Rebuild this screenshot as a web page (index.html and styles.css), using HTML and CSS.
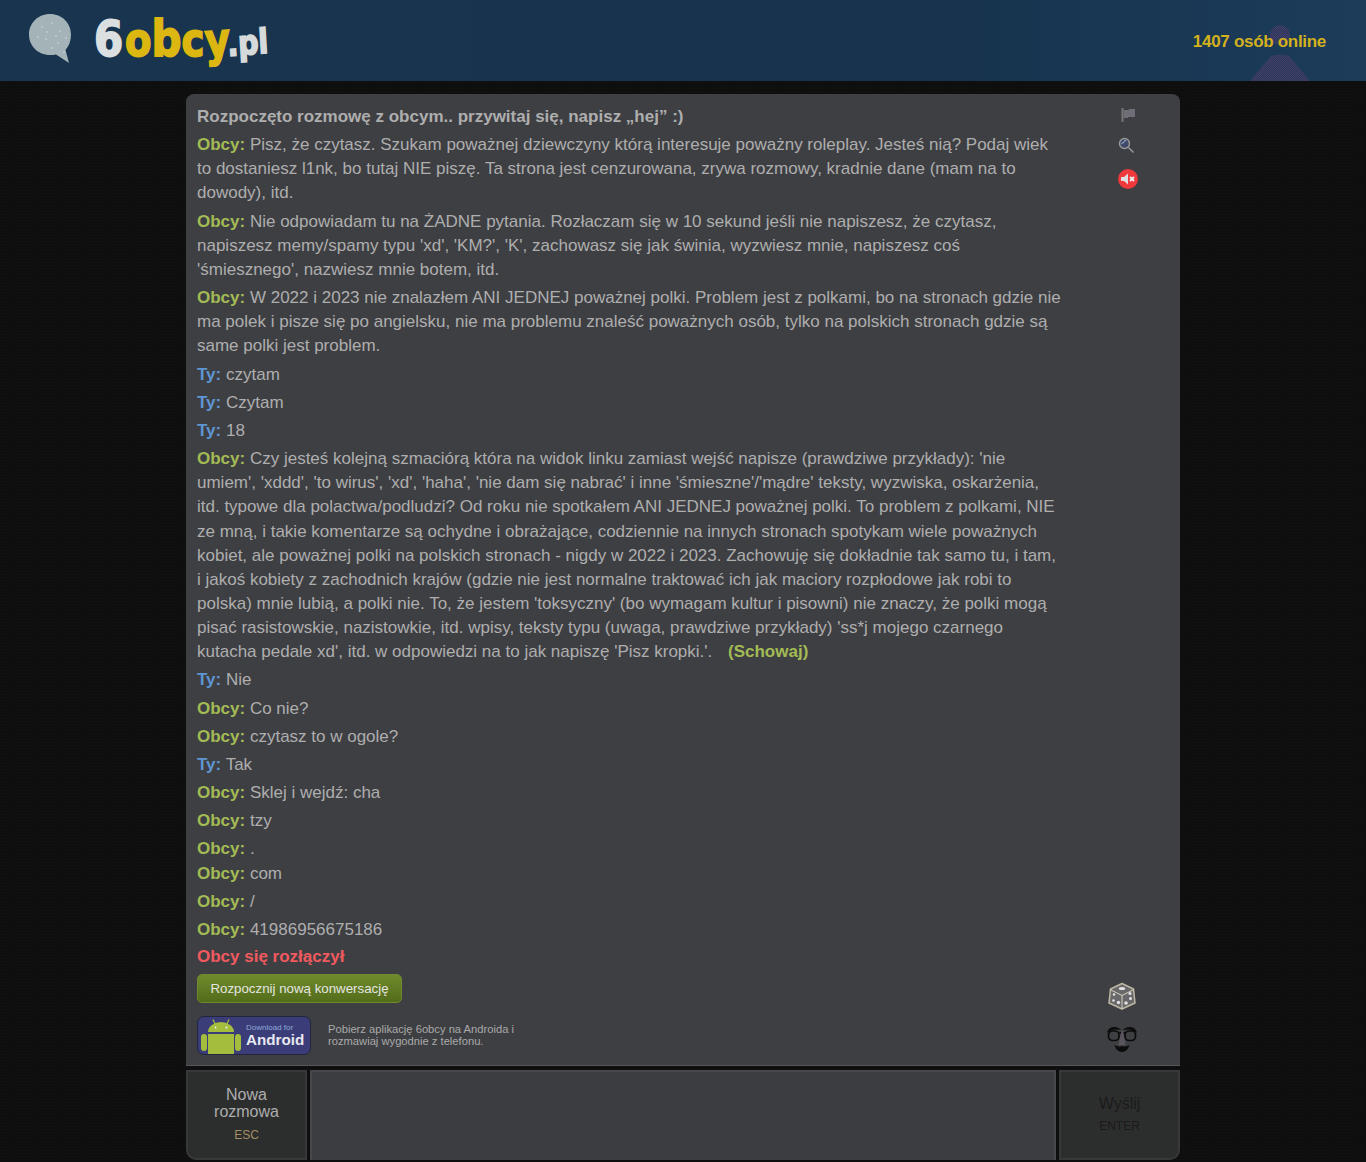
FILE: index.html
```html
<!DOCTYPE html>
<html lang="pl">
<head>
<meta charset="utf-8">
<title>6obcy.pl</title>
<link rel="stylesheet" href="styles.css">
</head>
<body>
<header class="top">
  <div class="brand">
    <svg class="bubble" width="44" height="50" viewBox="0 0 44 50"><path d="M22 1C10 1 1 10 1 21.500S10 42 22 42c2 0 4 0 6-.5L41 50l-3.500-13C41 33 43 28 43 21.500 43 10 34 1 22 1z" fill="#a3b3b8"/><g fill="#dfe6e8"><circle cx="14" cy="14" r=".7"/><circle cx="24" cy="10" r=".7"/><circle cx="32" cy="18" r=".7"/><circle cx="18" cy="26" r=".7"/><circle cx="30" cy="30" r=".7"/><circle cx="10" cy="24" r=".7"/><circle cx="24" cy="35" r=".7"/><circle cx="38" cy="25" r=".7"/><circle cx="19" cy="19" r=".7"/><circle cx="36" cy="39" r=".7"/><circle cx="28" cy="23" r=".7"/></g></svg>
    <div class="logo"><span class="logo-six">6</span><span class="logo-name"><span class="l-o">o</span><span class="l-b">b</span><span class="l-c">c</span><span class="l-y">y</span></span><span class="logo-tld">.pl</span></div>
  </div>
  <div class="online">1407 osób online</div>
  <svg class="silhouette" width="90" height="70" viewBox="0 0 90 70"><defs><pattern id="dith" width="2" height="2" patternUnits="userSpaceOnUse"><rect width="1" height="1" fill="#433d68"/><rect x="1" y="1" width="1" height="1" fill="#433d68"/><rect x="1" width="1" height="1" fill="#2a3a5e"/><rect y="1" width="1" height="1" fill="#2a3a5e"/></pattern></defs><circle cx="45" cy="24" r="10" fill="url(#dith)"/><path d="M15 70 35 46c3-3 17-3 20 0l20 24z" fill="url(#dith)"/></svg>
</header>
<main class="wrap">
  <section class="log">
    <div class="messages">
      <p class="msg status">Rozpoczęto rozmowę z obcym.. przywitaj się, napisz „hej” :)</p>
      <p class="msg"><b class="s">Obcy:</b> Pisz, że czytasz. Szukam poważnej dziewczyny którą interesuje poważny roleplay. Jesteś nią? Podaj wiek to dostaniesz l1nk, bo tutaj NIE piszę. Ta strona jest cenzurowana, zrywa rozmowy, kradnie dane (mam na to dowody), itd.</p>
      <p class="msg"><b class="s">Obcy:</b> Nie odpowiadam tu na ŻADNE pytania. Rozłaczam się w 10 sekund jeśli nie napiszesz, że czytasz, napiszesz memy/spamy typu 'xd', 'KM?', 'K', zachowasz się jak świnia, wyzwiesz mnie, napiszesz coś 'śmiesznego', nazwiesz mnie botem, itd.</p>
      <p class="msg"><b class="s">Obcy:</b> W 2022 i 2023 nie znalazłem ANI JEDNEJ poważnej polki. Problem jest z polkami, bo na stronach gdzie nie ma polek i pisze się po angielsku, nie ma problemu znaleść poważnych osób, tylko na polskich stronach gdzie są same polki jest problem.</p>
      <p class="msg"><b class="y">Ty:</b> czytam</p>
      <p class="msg"><b class="y">Ty:</b> Czytam</p>
      <p class="msg"><b class="y">Ty:</b> 18</p>
      <p class="msg"><b class="s">Obcy:</b> Czy jesteś kolejną szmaciórą która na widok linku zamiast wejść napisze (prawdziwe przykłady): 'nie umiem', 'xddd', 'to wirus', 'xd', 'haha', 'nie dam się nabrać' i inne 'śmieszne'/'mądre' teksty, wyzwiska, oskarżenia, itd. typowe dla polactwa/podludzi? Od roku nie spotkałem ANI JEDNEJ poważnej polki. To problem z polkami, NIE ze mną, i takie komentarze są ochydne i obrażające, codziennie na innych stronach spotykam wiele poważnych kobiet, ale poważnej polki na polskich stronach - nigdy w 2022 i 2023. Zachowuję się dokładnie tak samo tu, i tam, i jakoś kobiety z zachodnich krajów (gdzie nie jest normalne traktować ich jak maciory rozpłodowe jak robi to polska) mnie lubią, a polki nie. To, że jestem 'toksyczny' (bo wymagam kultur i pisowni) nie znaczy, że polki mogą pisać rasistowskie, nazistowkie, itd. wpisy, teksty typu (uwaga, prawdziwe przykłady) 'ss*j mojego czarnego kutacha pedale xd', itd. w odpowiedzi na to jak napiszę 'Pisz kropki.'. <b class="hide">(Schowaj)</b></p>
      <p class="msg"><b class="y">Ty:</b> Nie</p>
      <p class="msg"><b class="s">Obcy:</b> Co nie?</p>
      <p class="msg"><b class="s">Obcy:</b> czytasz to w ogole?</p>
      <p class="msg"><b class="y">Ty:</b> Tak</p>
      <p class="msg"><b class="s">Obcy:</b> Sklej i wejdź: cha</p>
      <p class="msg"><b class="s">Obcy:</b> tzy</p>
      <p class="msg tight"><b class="s">Obcy:</b> .</p>
      <p class="msg"><b class="s">Obcy:</b> com</p>
      <p class="msg"><b class="s">Obcy:</b> /</p>
      <p class="msg tighter"><b class="s">Obcy:</b> 41986956675186</p>
      <p class="msg end">Obcy się rozłączył</p>
      <button class="newchat">Rozpocznij nową konwersację</button>
      <div class="app">
        <div class="badge">
          <svg width="44" height="37" viewBox="0 0 44 37"><g fill="#a4bd3d"><rect x="3" y="17" width="6" height="17" rx="3"/><rect x="37" y="17" width="6" height="17" rx="3"/><path d="M10 15a13 10 0 0 1 26 0z"/><rect x="10" y="17" width="26" height="20"/></g><path d="M17 7 15 2.500M29 7l2-4.500" stroke="#a4bd3d" stroke-width="1.200"/><circle cx="17.500" cy="10.500" r="1" fill="#e8ecf5"/><circle cx="28.500" cy="10.500" r="1" fill="#e8ecf5"/></svg>
          <div class="badge-text"><span class="dl">Download for</span><span class="andr">Android</span></div>
        </div>
        <p class="app-text">Pobierz aplikację 6obcy na Androida i rozmawiaj wygodnie z telefonu.</p>
      </div>
    </div>
    <aside class="tools">
      <div class="tools-top">
        <svg width="16" height="16" viewBox="0 0 16 16"><rect x="1.500" y="1" width="2" height="14" fill="#777"/><path d="M3.500 3h5l1-1h5.500v8H8.500l-1 1h-4z" fill="#6f6d75"/></svg>
        <svg class="ic-mag" width="18" height="18" viewBox="0 0 18 18"><circle cx="7.500" cy="7.500" r="5" fill="#3f4a6b" stroke="#9a9a9a" stroke-width="1.400"/><path d="M4.500 8 9 4" stroke="#8594b0" stroke-width="1.500"/><path d="M11.500 11.500l5 5" stroke="#999" stroke-width="1.400"/></svg>
        <svg class="ic-speaker" width="20" height="20" viewBox="0 0 20 20"><circle cx="10" cy="10" r="10" fill="#f0393c"/><path d="M3 8h3l4-3.500v11L6 12H3z" fill="#dfdfdf"/><path d="M12 8l4 4m0-4-4 4" stroke="#efefef" stroke-width="1.800"/></svg>
      </div>
      <div class="tools-bottom">
        <svg width="28" height="28" viewBox="0 0 28 28"><path d="M14 1.500 25.500 7 27 21l-13 6-13-6L2.500 7z" fill="#69686a" stroke="#bdb8a4" stroke-width="1.500" stroke-linejoin="round"/><path d="M2 7.500l12 6 12-6M14 13.500V27" stroke="#d8d3c0" stroke-width="1" fill="none"/><g fill="#e2e2e2"><ellipse cx="14" cy="6.500" rx="3.200" ry="1.500"/><circle cx="6" cy="12.500" r="1.300"/><circle cx="10.500" cy="20.500" r="1.700"/><circle cx="5.500" cy="18.500" r="1.300"/><circle cx="22" cy="11.500" r="1.500"/><circle cx="18" cy="21" r="1.800"/><circle cx="22.500" cy="16.500" r="1.500"/></g></svg>
        <svg width="32" height="28" viewBox="0 0 32 28"><path d="M1 8C2 1 11 0 15 5c-4-1-10-1-14 3zM31 8C30 1 21 0 17 5c4-1 10-1 14 3z" fill="#0c0c0c"/><g fill="none" stroke="#0c0c0c" stroke-width="1.700"><rect x="2.500" y="6" width="10.500" height="9.500" rx="4"/><rect x="19" y="6" width="10.500" height="9.500" rx="4"/><path d="M12 8h8"/></g><path d="M15.500 6 12.500 20h7L17 6z" fill="#5a555c"/><path d="M8.500 20c2.500 1.500 5 2 7.500 1 2.500 1 5 .5 7.500-1-1 4-4 7-7.500 7s-6.500-3-7.500-7z" fill="#0c0c0c"/></svg>
      </div>
    </aside>
  </section>
  <section class="controls">
    <button class="ctl side first"><span class="ctl-main">Nowa<br>rozmowa</span><span class="ctl-key esc">ESC</span></button>
    <div class="entry"></div>
    <button class="ctl side last"><span class="ctl-main dim">Wyślij</span><span class="ctl-key dim">ENTER</span></button>
  </section>
</main>
</body>
</html>
```
FILE: styles.css
```css
* { box-sizing: border-box; }
html, body { margin: 0; height: 100%; }
body {
  background-color: #0e0e0e;
  background-image: radial-gradient(#141414 0.6px, transparent 0.8px);
  background-size: 3px 3px;
  font-family: "Liberation Sans", Arial, sans-serif;
  color: #aeaeae;
  overflow: hidden;
}
.top {
  height: 81px;
  background: linear-gradient(90deg, #18344f 0%, #17334e 70%, #1c3c5a 100%);
  display: flex;
  align-items: center;
  justify-content: space-between;
  padding: 0 40px 0 28px;
  position: relative;
  overflow: hidden;
}
.brand { display: flex; align-items: center; gap: 22px; }
.bubble { display: block; margin-bottom: 6px; }
.logo {
  font-family: "DejaVu Sans", sans-serif;
  font-weight: 700;
  display: flex;
  align-items: baseline;
  white-space: nowrap;
  margin-top: 1px;
  -webkit-text-stroke: 1.800px currentColor;
  paint-order: stroke fill;
}
.logo-six { font-size: 50px; line-height: 62px; color: #dcdfe0; transform: scaleX(0.84); transform-origin: left bottom; width: 31px; }
.logo-name { font-size: 46px; line-height: 62px; color: #dcb712; display: flex; align-items: baseline; transform: scaleX(0.84); transform-origin: left bottom; width: 104px; }
.l-b { font-size: 50px; }
.l-y { transform: rotate(-3deg); transform-origin: center; }
.l-o, .l-b, .l-c, .l-y { display: inline-block; }
.logo-tld { font-size: 34px; line-height: 62px; color: #d6dadb; transform: scaleX(0.84) rotate(-4deg); transform-origin: left bottom; }
.online {
  font-size: 17px;
  font-weight: 700;
  color: #d3b11c;
  position: relative;
  z-index: 1;
  letter-spacing: -0.3px;
  margin-top: 2px;
}
.silhouette { position: absolute; right: 41px; bottom: 0; }
.wrap { width: 994px; margin: 13px 0 0 186px; }
.log {
  height: 971px;
  background: #3e3f43;
  border-radius: 8px 8px 0 0;
  display: flex;
  justify-content: space-between;
  padding: 11px 0 0 11px;
  box-shadow: 0 1px 0 #57545a;
}
.messages { width: 866px; }
.msg {
  margin: 0 0 4px;
  font-size: 17px;
  line-height: 24.160px;
}
.tight { margin-bottom: 0.500px; }
.tighter { margin-bottom: 2px; }
.status { font-weight: 700; }
.s { color: #a3bb54; }
.y { color: #5f95d3; }
.hide { color: #a3bb54; margin-left: 11px; }
.end { color: #f05a5f; font-weight: 700; }
.newchat {
  display: block;
  margin-top: 5px;
  width: 205px;
  height: 29px;
  border: 1px solid #6f8a2e;
  border-radius: 5px;
  background: linear-gradient(#6f8a2c, #536c1a);
  color: #e5e5e0;
  font: 13.300px "Liberation Sans", Arial, sans-serif;
  padding: 0;
}
.app { display: flex; align-items: center; gap: 17px; margin-top: 13px; }
.badge {
  width: 114px;
  height: 39px;
  background: #3b3d78;
  border: 1px solid #23253f;
  border-radius: 7px;
  display: flex;
  align-items: flex-end;
  overflow: hidden;
  flex: none;
}
.badge svg { display: block; margin-right: 4px; flex: none; }
.badge-text { display: flex; flex-direction: column; align-self: center; }
.dl { font-size: 8px; line-height: 9px; color: #8ea9d9; }
.andr { font-size: 15.200px; font-weight: 700; line-height: 16px; color: #e8e8f0; }
.app-text {
  margin: 0;
  width: 205px;
  font-size: 11.200px;
  line-height: 12.500px;
  color: #a9a9a9;
}
.tools {
  width: 106px;
  display: flex;
  flex-direction: column;
  justify-content: space-between;
  align-items: center;
  padding: 2px 0 12px;
}
.tools-top { display: flex; flex-direction: column; align-items: center; gap: 13px; padding-left: 1px; }
.tools-bottom { display: flex; flex-direction: column; align-items: center; gap: 15px; margin-right: 11px; }
.ic-mag { margin-right: 3px; }
.ic-speaker { margin-top: 2px; }
.tools svg { display: block; }
.controls {
  display: flex;
  gap: 3px;
  height: 90px;
  margin-top: 5px;
}
.ctl {
  width: 121px;
  background: #2c2d2d;
  border: 2px solid #373839;
  display: flex;
  flex-direction: column;
  align-items: center;
  padding: 14px 0 0;
  font-family: "Liberation Sans", Arial, sans-serif;
}
.first { border-radius: 0 0 0 10px; }
.last { border-radius: 0 0 10px 0; padding-top: 23px; }
.ctl-main { font-size: 16px; line-height: 17px; color: #adadad; }
.ctl-key { font-size: 12px; line-height: 14px; margin-top: 7px; color: #a48d63; }
.ctl-key.esc { margin-top: 8px; }
.ctl-main.dim, .ctl-key.dim { color: #1b1b1b; }
.entry { flex: 1; background: #3c3d40; border: 2px solid #48484c; border-bottom: 0; }
```
